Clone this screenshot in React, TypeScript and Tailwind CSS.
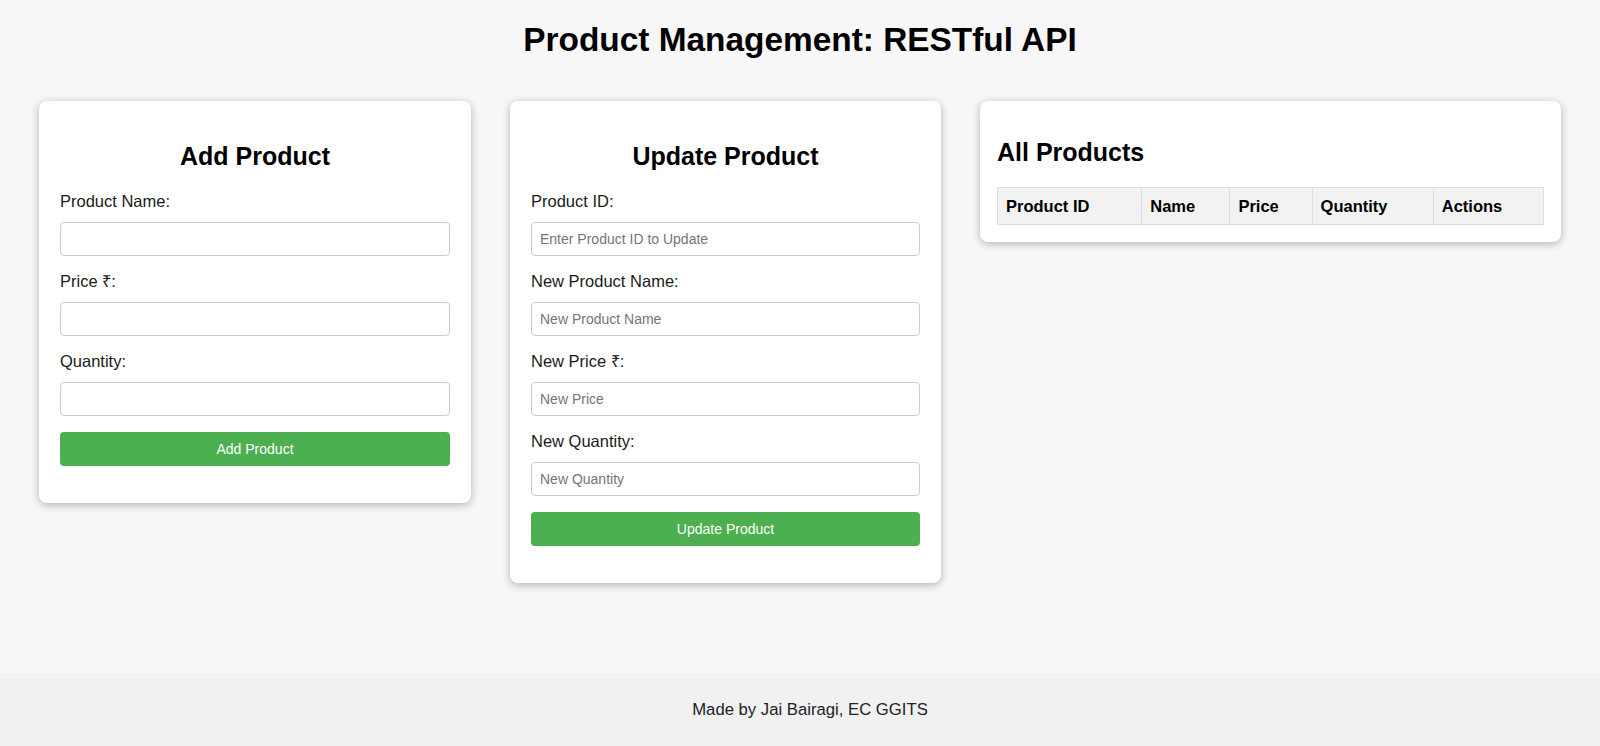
import React from 'react';

const inputCls =
  "block w-full h-[34px] px-[8px] border border-[#cccccc] rounded-[4px] bg-white text-[14px] text-[#222] placeholder:text-[#757575] outline-none";

const labelCls = "block text-[16.5px] leading-[19px] text-[#1a1a1a] mb-[11px]";

const Field = ({ label, placeholder, last }: { label: string; placeholder?: string; last?: boolean }) => (
  <div className={last ? "" : "mb-[16px]"}>
    <label className={labelCls}>{label}</label>
    <input type="text" placeholder={placeholder} className={inputCls} />
  </div>
);

const App = () => {
  const addFields = [
    { label: "Product Name:" },
    { label: "Price ₹:" },
    { label: "Quantity:" },
  ];

  const updateFields = [
    { label: "Product ID:", placeholder: "Enter Product ID to Update" },
    { label: "New Product Name:", placeholder: "New Product Name" },
    { label: "New Price ₹:", placeholder: "New Price" },
    { label: "New Quantity:", placeholder: "New Quantity" },
  ];

  const columns = [
    { name: "Product ID", w: "w-[144px]" },
    { name: "Name", w: "w-[88px]" },
    { name: "Price", w: "w-[82px]" },
    { name: "Quantity", w: "w-[121px]" },
    { name: "Actions", w: "w-[110px]" },
  ];

  return (
    <div className="min-h-screen flex flex-col bg-[#f7f7f7] font-['Liberation_Sans',Arial,sans-serif] text-black">
      <h1 className="mt-[21px] text-center text-[33.4px] leading-[37px] font-bold">
        Product Management: RESTful API
      </h1>

      <div className="flex items-start gap-[39px] px-[39px] mt-[43px]">
        {/* add */}
        <div className="w-[432px] bg-white rounded-[8px] shadow-[0_2px_9px_rgba(0,0,0,0.28)] px-[21px] pt-[41px] pb-[37px]">
          <h2 className="text-center text-[25px] leading-[29px] font-bold mb-[21px]">Add Product</h2>
          {addFields.map((f) => (
            <Field key={f.label} label={f.label} />
          ))}
          <button className="block w-full h-[34px] rounded-[4px] bg-[#4caf50] text-white text-[14px]">
            Add Product
          </button>
        </div>

        {/* update */}
        <div className="w-[431px] bg-white rounded-[8px] shadow-[0_2px_9px_rgba(0,0,0,0.28)] px-[21px] pt-[41px] pb-[37px]">
          <h2 className="text-center text-[25px] leading-[29px] font-bold mb-[21px]">Update Product</h2>
          {updateFields.map((f) => (
            <Field key={f.label} label={f.label} placeholder={f.placeholder} />
          ))}
          <button className="block w-full h-[34px] rounded-[4px] bg-[#4caf50] text-white text-[14px]">
            Update Product
          </button>
        </div>

        {/* list */}
        <div className="flex-1 bg-white rounded-[8px] shadow-[0_2px_9px_rgba(0,0,0,0.28)] px-[17px] pt-[37px] pb-[17px]">
          <h2 className="text-[25px] leading-[29px] font-bold mb-[20px]">All Products</h2>
          <table className="w-full table-fixed border-collapse">
            <thead>
              <tr>
                {columns.map((c) => (
                  <th
                    key={c.name}
                    className={`${c.w} bg-[#f2f2f2] border border-[#dddddd] px-[8px] h-[37px] text-left text-[16.5px] font-bold`}
                  >
                    {c.name}
                  </th>
                ))}
              </tr>
            </thead>
            <tbody></tbody>
          </table>
        </div>
      </div>

      <footer className="mt-auto bg-[#f1f1f1] h-[73px] flex items-center justify-center pl-[20px] text-[16.7px] text-[#222]">
        Made by Jai Bairagi, EC GGITS
      </footer>
    </div>
  );
};

export default App;
